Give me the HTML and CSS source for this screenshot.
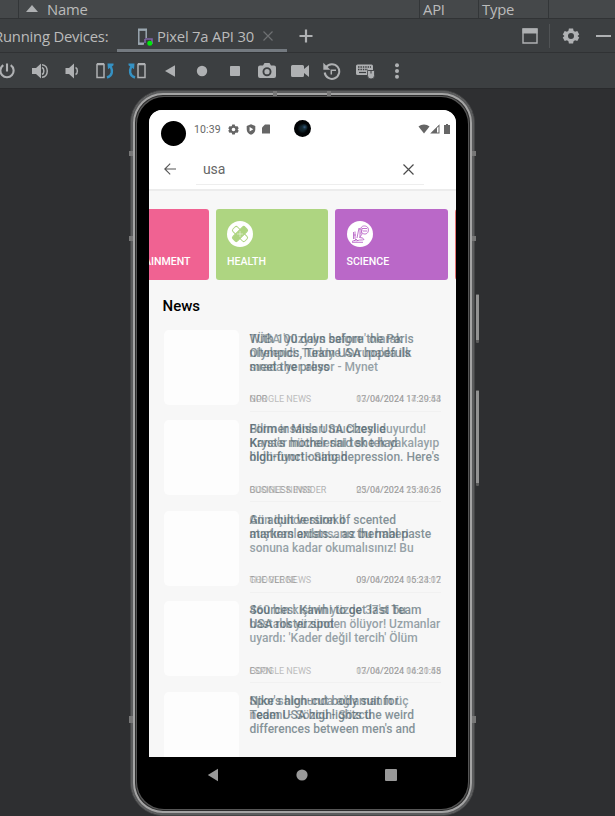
FILE: index.html
```html
<!DOCTYPE html>
<html lang="en">
<head>
<meta charset="utf-8">
<title>Running Devices</title>
<link rel="stylesheet" href="styles.css">
</head>
<body>
<div class="ide">
  <div class="columns">
    <div class="col col-gutter"></div>
    <div class="col col-name"><svg width="12" height="7" viewBox="0 0 12 7"><path d="M0 7 6 0l6 7z" fill="#afb1b3"/></svg><span>Name</span></div>
    <div class="col col-api">API</div>
    <div class="col col-type">Type</div>
    <div class="col"></div>
  </div>
  <div class="tabs">
    <span class="tabs-title">Running Devices:</span>
    <div class="tab">
      <svg class="tab-icon" width="16" height="18" viewBox="0 0 16 18"><path d="M6 16H1.800V2H9.200v8" fill="none" stroke="#9aa7b0" stroke-width="1.500"/><path d="M1 1.500h9M1 15.700h6" stroke="#9aa7b0" stroke-width="2.200"/><path d="M8 11h7v5M8 11v4" fill="none" stroke="#7f65a5" stroke-width="1.600"/><circle cx="12.800" cy="15.200" r="2.500" fill="#00e80c"/></svg>
      <span class="tab-label">Pixel 7a API 30</span>
      <svg class="tab-close" width="10" height="10" viewBox="0 0 10 10"><path d="m.5.5 9 9m0-9-9 9" stroke="#6e7072" stroke-width="1.200"/></svg>
    </div>
    <svg class="plus" width="14" height="14" viewBox="0 0 14 14"><path d="M7 .5v13M.5 7h13" stroke="#afb1b3" stroke-width="2.200"/></svg>
    <div class="tab-tools">
      <svg width="16" height="16" viewBox="0 0 16 16"><path d="M1 1h14v14H1z" fill="none" stroke="#afb1b3" stroke-width="1.400"/><path d="M.5.5h15v5H.5z" fill="#afb1b3"/></svg>
      <i class="divider"></i>
      <svg width="18" height="18" viewBox="0 0 24 24"><path fill="#afb1b3" fill-rule="evenodd" d="m9.200 2-.6 3-2 1.200-3-1L1 10l2.300 2L1 14l2.600 4.800 3-1 2 1.200.6 3h5.600l.6-3 2-1.200 3 1L23 14l-2.300-2L23 10l-2.600-4.800-3 1-2-1.200-.6-3zM12 8a4 4 0 1 1 0 8 4 4 0 0 1 0-8"/></svg>
      <i class="minimize"></i>
    </div>
  </div>
  <div class="toolbar">
    <span class="tool"><svg width="18" height="18" viewBox="0 0 18 18" fill="none" stroke="#afb1b3" stroke-width="2.100"><path d="M9 1.500v8M5.300 3.200A6.600 6.600 0 1 0 12.700 3.200"/></svg></span>
    <span class="tool"><svg width="18" height="18" viewBox="0 0 18 18"><path d="M1 6h4l5-4.500v15L5 12H1z" fill="#afb1b3"/><path d="M11 5.500c2.500 1 2.500 6 0 7M11 2.700c7 .5 7 12.100 0 12.600" fill="none" stroke="#afb1b3" stroke-width="1.500"/></svg></span>
    <span class="tool"><svg width="18" height="18" viewBox="0 0 18 18"><path d="M2.500 6h3.500l5-4.500v15L6 12H2.500z" fill="#afb1b3"/><path d="M12.500 5.500c2.500 1 2.500 6 0 7" fill="none" stroke="#afb1b3" stroke-width="1.500"/></svg></span>
    <span class="tool"><svg width="20" height="18" viewBox="0 0 20 18"><path d="M2 2.500h7v13H2zM2 1.800h7M2 15.500h7" fill="none" stroke="#afb1b3" stroke-width="1.500"/><path d="M12 15.500c6-2 5.500-7 3.800-11" fill="none" stroke="#3592c4" stroke-width="2.400"/><path d="M12.500 1.500h6v1.700l-5.500 4z" fill="#3592c4"/></svg></span>
    <span class="tool"><svg width="20" height="18" viewBox="0 0 20 18"><path d="M11 2.500h7v13h-7zM11 1.800h7M11 15.500h7" fill="none" stroke="#afb1b3" stroke-width="1.500"/><path d="M8 15.500c-6-2-5.500-7-3.800-11" fill="none" stroke="#3592c4" stroke-width="2.400"/><path d="M7.500 1.500h-6v1.700l5.500 4z" fill="#3592c4"/></svg></span>
    <span class="tool"><svg width="12" height="12" viewBox="0 0 12 12"><path d="M1 6 11 .3v11.400z" fill="#afb1b3"/></svg></span>
    <span class="tool"><svg width="12" height="12" viewBox="0 0 12 12"><circle cx="6" cy="6" r="5.200" fill="#afb1b3"/></svg></span>
    <span class="tool"><svg width="12" height="12" viewBox="0 0 12 12"><rect x="1" y="1" width="10" height="10" rx=".8" fill="#afb1b3"/></svg></span>
    <span class="tool"><svg width="18" height="16" viewBox="0 0 18 16"><path fill="#afb1b3" fill-rule="evenodd" d="M5 2.500 6.500 0h5L13 2.500h3a2 2 0 0 1 2 2V13a2 2 0 0 1-2 2H2a2 2 0 0 1-2-2V4.500a2 2 0 0 1 2-2zM9 4.200a4.500 4.500 0 1 0 0 9 4.500 4.500 0 0 0 0-9"/><circle cx="9" cy="8.700" r="2.600" fill="#afb1b3"/></svg></span>
    <span class="tool"><svg width="18" height="14" viewBox="0 0 18 14"><path fill="#afb1b3" d="M1.500 1h10A1.500 1.500 0 0 1 13 2.500V5l5-4v12l-5-4v2.500a1.500 1.500 0 0 1-1.500 1.500h-10A1.500 1.500 0 0 1 0 11.500v-9A1.500 1.500 0 0 1 1.500 1"/></svg></span>
    <span class="tool"><svg width="18" height="18" viewBox="0 0 18 18" fill="none" stroke="#afb1b3"><path d="M3 5.300a7.300 7.300 0 1 1-1.300 5.200" stroke-width="2"/><path d="M.3.800v7h7z" fill="#afb1b3" stroke="none"/><path d="M8.300 12.500V8.200H13" stroke-width="1.500"/></svg></span>
    <span class="tool"><svg width="20" height="18" viewBox="0 0 20 18"><path fill="#afb1b3" d="M2.500 2.500h14A1.500 1.500 0 0 1 18 4v4h-4.500v5h-11A1.500 1.500 0 0 1 1 11.500V4a1.500 1.500 0 0 1 1.500-1.500"/><path d="M3 5h13M3 7.500h10" stroke="#3c3f41" stroke-width="1.300" stroke-dasharray="1.500 .9"/><path d="M4 10.500h7" stroke="#3c3f41" stroke-width="1.200"/><path fill="#afb1b3" stroke="#3c3f41" stroke-width=".8" d="M12.500 8.500h7v5a3.500 3.500 0 0 1-7 0z"/><path d="M16 8.500v3" stroke="#3c3f41"/></svg></span>
    <span class="tool"><svg width="6" height="16" viewBox="0 0 6 16" fill="#afb1b3"><circle cx="3" cy="2.300" r="2"/><circle cx="3" cy="8" r="2"/><circle cx="3" cy="13.700" r="2"/></svg></span>
  </div>

  <div class="stage">
    <div class="phone">
      <i class="band band-l1"></i><i class="band band-l2"></i><i class="band band-r1"></i><i class="band band-r2"></i><i class="band band-r3"></i><i class="band band-l3"></i>
      <i class="band band-t1"></i><i class="band band-t2"></i>
      <i class="key key-power"></i><i class="key key-volume"></i>
      <div class="bezel">
        <div class="screen">
          <div class="status">
            <i class="cutout"></i>
            <span class="clock">10:39</span>
            <svg width="11" height="11" viewBox="0 0 24 24"><path fill="#666" fill-rule="evenodd" d="m9.200 1-.6 3-2 1.200-3-1L.5 9.500l2.500 2.500-2.500 2.500 3.100 5.300 3-1 2 1.200.6 3h5.600l.6-3 2-1.200 3 1 3.100-5.300L21 12l2.400-2.500-3.100-5.300-3 1-2-1.200-.6-3zM12 8a4 4 0 1 1 0 8 4 4 0 0 1 0-8"/></svg>
            <svg width="10" height="11" viewBox="0 0 10 11"><path fill="#666" fill-rule="evenodd" d="M5 .3 9.300 2v3.300C9.300 8 7.500 10 5 10.800 2.500 10 .7 8 .7 5.300V2zM3.600 3v4.400L7.300 5.200z"/></svg>
            <svg width="8" height="10" viewBox="0 0 8 10"><path fill="#666" d="M3 .5h4.500a.5.500 0 0 1 .5.500v8.500H0V3.500z"/></svg>
            <i class="camera"></i>
            <span class="signal">
              <svg width="12" height="10" viewBox="0 0 12 10"><path fill="#666" d="M.5 2.500C3.500-.2 8.500-.2 11.500 2.500L6 9.500z"/></svg>
              <svg width="10" height="10" viewBox="0 0 10 10"><path fill="#666" fill-rule="evenodd" d="M9.500.2v9.300H.2zM8.500 2.500 7 4v4.500h1.500z"/></svg>
              <svg width="6" height="10" viewBox="0 0 6 10"><path fill="#666" d="M2 0h2v1h2v9H0V1h2z"/></svg>
            </span>
          </div>
          <div class="search">
            <svg width="12" height="12" viewBox="0 0 12 12" fill="none" stroke="#555" stroke-width="1.100"><path d="M12 6H1M6.200.6.800 6l5.400 5.400"/></svg>
            <div class="field"><span>usa</span><svg width="11" height="11" viewBox="0 0 11 11"><path d="m.5.5 10 10m0-10-10 10" stroke="#4b4b4b" stroke-width="1.200"/></svg></div>
          </div>
          <div class="feed">
            <div class="cards">
              <div class="card pink"><span>ENTERTAINMENT</span></div>
              <div class="card green"><svg width="26" height="26" viewBox="0 0 26 26"><circle cx="13" cy="13" r="13" fill="#fff"/><g fill="#aed581" stroke="#aed581"><rect x="4.500" y="9.800" width="17" height="6.400" rx="1.800" fill="#fff" transform="rotate(45 13 13)"/><rect x="4.500" y="9.800" width="17" height="6.400" rx="1.800" transform="rotate(-45 13 13)"/></g><path d="M13 10.500v5M10.500 13h5" stroke="#fff" stroke-dasharray="1 1"/></svg><span>HEALTH</span></div>
              <div class="card purple"><svg width="26" height="26" viewBox="0 0 26 26" fill="none" stroke="#ba68c8" stroke-width=".9"><circle cx="13" cy="13" r="13" fill="#fff" stroke="none"/><path d="M6.500 11v7M8 10.500V18M6.500 14H9M12 7l-2 10M13 7v9M12 8h3l-1 5M14 7c1-3 6-2.500 7 0s0 6-3 6-4-2-3-4M15 7.500h5M16 10h4M15.500 12.500l-3 4 3 .5M5 20.500c3-2 4 0 6-1s4 0 6-1l-2-2M5 21.300h11M7 20l2-2 2 2"/></svg><span>SCIENCE</span></div>
              <div class="card red"></div>
            </div>
            <h2>News</h2>
            <article class="row">
              <div class="thumb"></div>
              <div class="layers">
                <div class="story old"><p>TÜBA 'yüzyılın salgını' olarak<br>nitelendi: Türkiye Avrupa'da ilk<br>sırada yer alıyor - Mynet</p><footer><span>GOOGLE NEWS</span><time>03/06/2024 14:30:53</time></footer></div>
                <div class="story"><p>With 100 days before the Paris<br>Olympics, Team USA hopefuls<br>meet the press</p><footer><span>NPR</span><time>17/04/2024 17:29:44</time></footer></div>
              </div>
            </article>
            <article class="row">
              <div class="thumb"></div>
              <div class="layers">
                <div class="story old"><p>Bilim insanları mucizeyi duyurdu!<br>Kanser hücrelerini tek tek yakalayıp<br>öldürüyor! - Sabah</p><footer><span>GOOGLE NEWS</span><time>03/06/2024 15:36:25</time></footer></div>
                <div class="story"><p>Former Miss USA Cheslie<br>Kryst's mother said she had<br>high-functioning depression. Here's</p><footer><span>BUSINESS INSIDER</span><time>25/04/2024 23:40:36</time></footer></div>
              </div>
            </article>
            <article class="row">
              <div class="thumb"></div>
              <div class="layers">
                <div class="story old"><p>Gün içinde sürekli<br>atıştıranlardansanız bu haberi<br>sonuna kadar okumalısınız! Bu</p><footer><span>GOOGLE NEWS</span><time>03/06/2024 06:33:07</time></footer></div>
                <div class="story"><p>An adult version of scented<br>markers exists... as thermal paste</p><footer><span>THE VERGE</span><time>09/04/2024 15:24:12</time></footer></div>
              </div>
            </article>
            <article class="row">
              <div class="thumb"></div>
              <div class="layers">
                <div class="story old"><p>460 bin kişinin yüzde 37'si bu<br>hastalık yüzünden ölüyor! Uzmanlar<br>uyardı: 'Kader değil tercih' Ölüm</p><footer><span>GOOGLE NEWS</span><time>03/06/2024 06:30:55</time></footer></div>
                <div class="story"><p>Sources: Kawhi to get last Team<br>USA roster spot</p><footer><span>ESPN</span><time>17/04/2024 14:21:48</time></footer></div>
              </div>
            </article>
            <article class="row">
              <div class="thumb"></div>
              <div class="layers">
                <div class="story old"><p>Spor salonunda ağlamanın üç<br>nedeni - Sözcü - Sözcü</p></div>
                <div class="story"><p>Nike's high-cut body suit for<br>Team USA highlights the weird<br>differences between men's and</p></div>
              </div>
            </article>
          </div>
        </div>
        <div class="nav">
          <svg width="12" height="14" viewBox="0 0 12 14"><path d="M.8 7 11 .8v12.400z" fill="#999"/></svg>
          <svg width="12" height="12" viewBox="0 0 12 12"><circle cx="6" cy="6" r="5.600" fill="#999"/></svg>
          <svg width="12" height="12" viewBox="0 0 12 12"><rect width="12" height="12" rx="1" fill="#999"/></svg>
        </div>
      </div>
    </div>
  </div>
</div>
</body>
</html>
```
FILE: styles.css
```css
* { box-sizing: border-box; }
body { margin: 0; background: #2e2f31; }
svg { display: block; flex: none; }
i { display: block; }
.ide { width: 615px; height: 816px; overflow: hidden; font-family: "Open Sans", "Noto Sans", sans-serif; font-size: 14.8px; letter-spacing: -.2px; color: #bbb; }

.columns { display: flex; height: 19px; background: #45484a; border-bottom: 1px solid #313335; line-height: 19px; }
.col { border-right: 1px solid #333638; flex: none; white-space: nowrap; }
.col-gutter { width: 19px; }
.col-name { width: 401px; display: flex; gap: 9px; padding-left: 7px; }
.col-name svg { margin-top: 5px; }
.col-api { width: 59px; padding-left: 3px; }
.col-type { width: 70px; padding-left: 3px; }
.col:last-child { flex: 1; border: 0; }

.tabs { display: flex; height: 34px; background: #3c3f41; border-bottom: 1px solid #303234; align-items: center; white-space: nowrap; }
.tabs-title { width: 118px; margin-left: -6px; flex: none; }
.tab { display: flex; align-items: center; width: 170px; height: 33px; margin-left: 5px; padding: 0 0 0 20px; flex: none; background: linear-gradient(#747a80, #747a80) 0 30px / 170px 4px no-repeat; }
.tab-icon { margin: 2px 4px 0 0; }
.tab-label { width: 106px; }
.tab-close { margin-top: 1px; }
.plus { margin-left: 12px; }
.tab-tools { margin-left: auto; display: flex; align-items: center; padding-right: 4px; }
.divider { width: 1px; height: 24px; background: #505355; margin: 0 12px 0 11px; }
.minimize { width: 15px; height: 2px; background: #afb1b3; margin-left: 16px; }

.toolbar { display: flex; height: 36px; background: #3c3f41; border-bottom: 1px solid #292a2c; }
.tool { width: 32.5px; flex: none; display: flex; align-items: center; justify-content: center; }
.tool:first-child { margin-left: -9px; }

.stage { height: 727px; padding: 1px 0 0 130px; }
.phone { position: relative; width: 345px; height: 726px; border-radius: 33px; padding: 6px 6px 6px 6px; letter-spacing: 0;
  background: #555; border: 1px solid #444546; box-shadow: inset 0 0 0 2px #5b5c5d, inset 0 0 0 4px #a4a4a4, inset 0 0 0 5px #2c2c2c; }
.bezel { height: 712px; border-radius: 27px; background: #000; padding: 13px 12px 0; }
.screen { width: 307px; height: 647px; background: #f7f7f7; border-radius: 13px 13px 0 0; overflow: hidden; font-family: Roboto, sans-serif; }
.band { position: absolute; background: #777; width: 4px; height: 5px; }
.band-l1 { left: -2px; top: 60px; } .band-l2 { left: -2px; top: 145px; } .band-l3 { left: -2px; top: 625px; height: 7px; }
.band-r1 { right: -2px; top: 60px; } .band-r2 { right: -2px; top: 145px; } .band-r3 { right: -2px; top: 625px; height: 7px; }
.band-t1 { left: 142px; top: 0; } .band-t2 { left: 196px; top: 0; }
.key { position: absolute; right: -5px; width: 3px; background: #929292; border-radius: 1px; border: solid #5b5b5b; border-width: 1px 0 3px; }
.key-power { top: 203px; height: 49px; }
.key-volume { top: 299px; height: 96px; }

.status { position: relative; height: 38px; background: #fff; display: flex; align-items: center; padding-left: 11.500px; }
.cutout { width: 25px; height: 25px; border-radius: 50%; background: #000; margin-top: 9px; }
.clock { width: 36px; margin-left: 8.500px; font-size: 10.500px; letter-spacing: .1px; color: #666; }
.status > svg { margin-right: 6.500px; }
.status > svg:nth-of-type(1) { margin-left: -2px; }
.camera { position: absolute; left: 145px; top: 10px; width: 17px; height: 17px; border-radius: 50%; background: radial-gradient(circle at 62% 42%, #3c5c86 0, #16323f 12%, transparent 24%), radial-gradient(circle, #12242c 0 20%, #020507 42%, #000); }
.signal { margin-left: auto; display: flex; padding-right: 6px; }
.signal svg:nth-child(3) { margin-left: 4.500px; }

.search { display: flex; align-items: center; height: 43px; background: #fff; border-bottom: 2px solid #ececec; padding-left: 15px; }
.field { width: 228px; height: 35px; margin: -2px 0 0 20px; border-bottom: 1px solid #eee; display: flex; align-items: center; justify-content: space-between; padding: 4px 10px 0 7px; font-size: 14px; letter-spacing: -.1px; color: #666; }

.feed { height: 566px; overflow: hidden; padding-left: 13px; }
.cards { display: flex; gap: 7px; margin: 18px 0 0 -66px; }
.card { width: 112.500px; height: 71px; flex: none; border-radius: 3px; padding: 11.500px 11.500px 0; color: #fff; font-size: 10.600px; font-weight: 500; line-height: 12px; white-space: nowrap; }
.card span { display: block; margin-top: 9.500px; }
.pink { background: #f06292; } .pink span { margin: 35.500px 6.500px 0 0; display: flex; justify-content: flex-end; }
.green { background: #aed581; } .purple { background: #ba68c8; } .red { background: #e57373; }
h2 { margin: 16px 0 0 .5px; font-size: 15px; line-height: 20px; height: 32.700px; font-weight: 500; color: #000; }

.row { height: 90.500px; display: flex; gap: 11px; }
.thumb { width: 75px; height: 75px; margin: 1px 0 0 1.500px; border-radius: 5px; background: #fdfdfd; flex: none; }
.layers { display: grid; grid-template-columns: 191.500px; width: 191.500px; }
.story { grid-area: 1 / 1; height: 83px; border-bottom: 1px solid #f0f0f0; opacity: .64; padding-top: 3px; color: #455a64; white-space: nowrap; }
.old { opacity: .54; }
.story p { margin: 0; height: 61.500px; font-size: 12px; line-height: 14px; font-weight: 500; }
.story footer { display: flex; justify-content: space-between; font-size: 9px; line-height: 12px; color: #8a8a8a; }

.nav { display: flex; justify-content: space-between; align-items: center; padding: 0 59.500px 0 58px; height: 36px; }
```
